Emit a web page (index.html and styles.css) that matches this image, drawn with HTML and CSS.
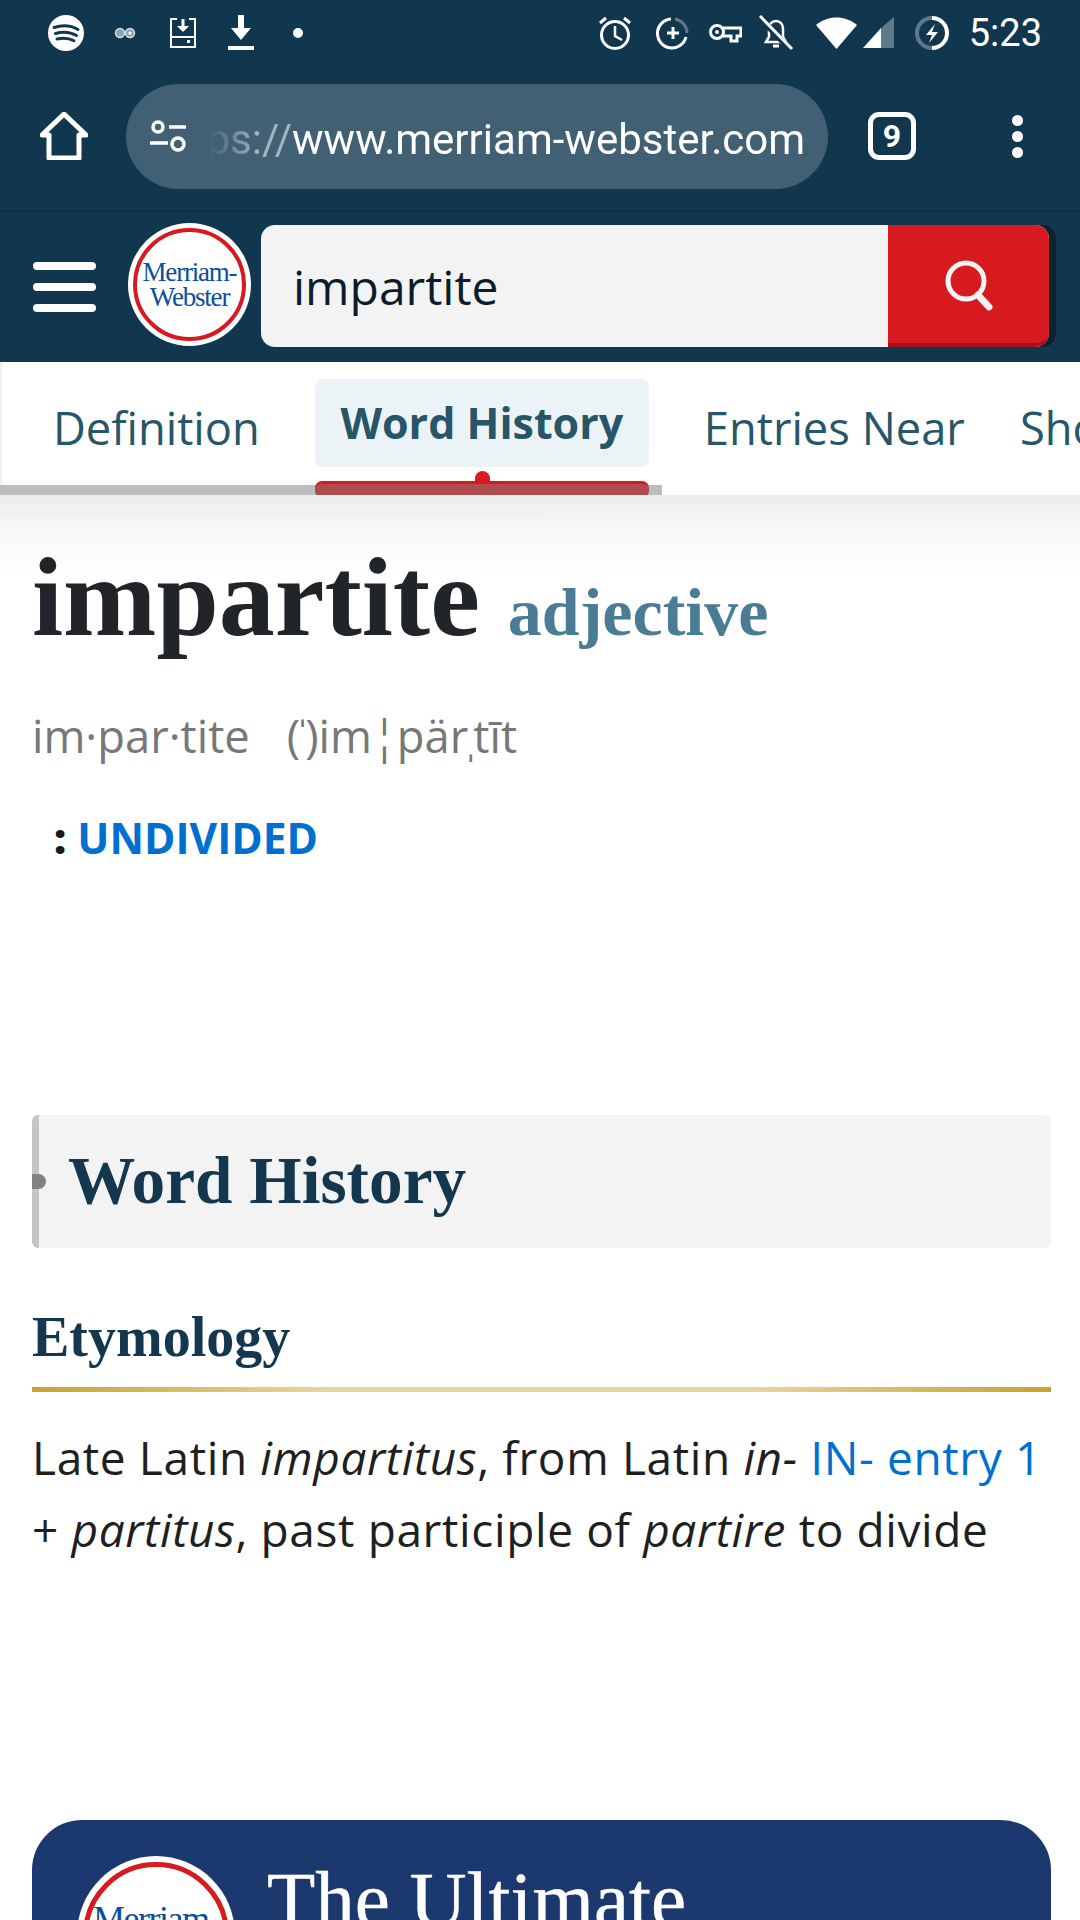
FILE: index.html
```html
<!DOCTYPE html>
<html lang="en">
<head>
<meta charset="utf-8">
<title>impartite</title>
<link rel="stylesheet" href="styles.css">
</head>
<body>
<div class="chrome">
  <div class="status">
    <div class="status-left">
      <svg class="i-spotify" width="38" height="38" viewBox="0 0 38 38"><circle cx="19" cy="19" r="18" fill="#fff"/><path d="M7 13.500c8-2.500 17-2 24 2M8.500 19.500c7-2 15-1.500 21 2M10 25c6-1.500 12-1 17 1.800" fill="none" stroke="#11374f" stroke-width="3" stroke-linecap="round"/></svg>
      <svg class="i-glasses" width="22" height="14" viewBox="0 0 22 14"><circle cx="6" cy="7" r="4.500" fill="#8fa3b0" stroke="#d5dce1" stroke-width="1.500"/><circle cx="16" cy="7" r="4.500" fill="#8fa3b0" stroke="#d5dce1" stroke-width="1.500"/><circle cx="16" cy="7" r="1.500" fill="#fff"/></svg>
      <svg class="i-save" width="28" height="32" viewBox="0 0 28 32"><path d="M8 2H2v28h24V2h-6M2 20h24" fill="none" stroke="#fff" stroke-width="2"/><path d="M14 2v9" stroke="#fff" stroke-width="3"/><path d="M8 9h12l-6 6z" fill="#fff"/><rect x="18" y="23" width="3" height="3" fill="#fff"/></svg>
      <svg class="i-download" width="26" height="35" viewBox="0 0 26 35"><path d="M10 0h6v13h7L13 25 3 13h7z" fill="#fff"/><rect y="31" width="26" height="4" fill="#fff"/></svg>
      <svg class="i-dot" width="10" height="10" viewBox="0 0 10 10"><circle cx="5" cy="5" r="5" fill="#fff"/></svg>
    </div>
    <div class="status-right">
      <svg width="34" height="36" viewBox="0 0 34 36"><circle cx="17" cy="20" r="13.500" fill="none" stroke="#fff" stroke-width="3"/><path d="M17 11v10l7 4" fill="none" stroke="#fff" stroke-width="2.500"/><path d="M2 8l6-5M32 8l-6-5" stroke="#fff" stroke-width="3"/></svg>
      <svg class="i-data" width="34" height="36" viewBox="0 0 34 36"><path d="M15 4A14.500 14.500 0 1 0 30 22" fill="none" stroke="#fff" stroke-width="3"/><path d="M19 4a14.500 14.500 0 0 1 12 14" fill="none" stroke="#60798a" stroke-width="3"/><path d="M17 12v12M11 18h12" stroke="#fff" stroke-width="3"/></svg>
      <svg class="i-key" width="34" height="20" viewBox="0 0 34 20"><circle cx="9" cy="9" r="6.500" fill="none" stroke="#fff" stroke-width="3"/><circle cx="9" cy="9" r="2" fill="#fff"/><path d="M15 5h18v8h-4v5h-6v-5h-8" fill="none" stroke="#fff" stroke-width="3"/></svg>
      <svg class="i-bell" width="36" height="36" viewBox="0 0 36 36"><path d="M8 27h20l-3-5v-8c0-5-3-8-7-8s-7 3-7 8v8z" fill="none" stroke="#fff" stroke-width="2.500"/><path d="M15 31h6" stroke="#fff" stroke-width="3"/><path d="M2 3l31 32" stroke="#11374f" stroke-width="6"/><path d="M2 1l32 33" stroke="#fff" stroke-width="3"/></svg>
      <svg class="i-wifi" width="41" height="32" viewBox="0 0 41 32"><path d="M0 8C12-2 29-2 41 8L20.500 32z" fill="#fff"/></svg>
      <svg class="i-signal" width="31" height="31" viewBox="0 0 31 31"><path d="M31 0v31H18V11z" fill="#5f7a8b"/><path d="M0 31L18 11v20z" fill="#fff"/></svg>
      <svg class="i-batt" width="34" height="36" viewBox="0 0 34 36"><path d="M17 3a15 15 0 0 1 0 30" fill="none" stroke="#fff" stroke-width="4"/><path d="M17 33a15 15 0 0 1 0-30" fill="none" stroke="#60798a" stroke-width="4"/><path d="M20 9l-9 11h6l-3 8 9-11h-6z" fill="#fff"/></svg>
      <span class="time">5:23</span>
    </div>
  </div>
  <div class="toolbar">
    <svg class="i-home" width="48" height="48" viewBox="0 0 48 48"><path d="M9 46h30V23h7L24 2 2 23h7z" fill="none" stroke="#fff" stroke-width="5" stroke-linejoin="round"/></svg>
    <div class="pill">
      <svg class="i-tune" width="38" height="34" viewBox="0 0 38 34"><circle cx="9" cy="8" r="5" fill="none" stroke="#fff" stroke-width="3.500"/><path d="M20 8h17M1 24h18" stroke="#fff" stroke-width="3.500"/><circle cx="29" cy="25" r="6" fill="none" stroke="#fff" stroke-width="3.500"/></svg>
      <div class="url"><span class="url-track"><span class="scheme">https://</span>www.merriam-webster.com</span></div>
    </div>
    <div class="tabcount">9</div>
    <div class="menu"><i></i><i></i><i></i></div>
  </div>
</div>

<header class="site">
  <div class="burger"><i></i><i></i><i></i></div>
  <div class="logo"><div class="logo-ring"><span>Merriam-</span><span>Webster</span></div></div>
  <div class="search">
    <div class="search-input">impartite</div>
    <div class="search-btn">
      <svg width="48" height="56" viewBox="0 0 48 56"><circle cx="21" cy="21" r="18" fill="none" stroke="#f3f3f3" stroke-width="5"/><path d="M33 35l11 12" stroke="#f3f3f3" stroke-width="7" stroke-linecap="round"/></svg>
    </div>
  </div>
</header>

<nav class="tabs">
  <a class="tab">Definition</a>
  <a class="tab tab-active">Word History</a>
  <a class="tab">Entries Near</a>
  <a class="tab">Show More</a>
</nav>

<div class="fade"></div>

<main class="content">
  <h1 class="headword">impartite <em class="pos">adjective</em></h1>
  <p class="pron"><span>im·par·tite</span><span>(<span class="mod">ˈ</span>)im¦pär<span class="mod">ˌ</span>tīt</span></p>
  <p class="def"><b>:</b> <a>UNDIVIDED</a></p>

  <h2 class="section">Word History</h2>
  <h3 class="sub">Etymology</h3>
  <p class="ety">Late Latin <i>impartitus</i>, from Latin <i>in-</i> <a>IN- entry 1</a> + <i>partitus</i>, past participle of <i>partire</i> to divide</p>

  <section class="promo">
    <div class="promo-logo"><div class="promo-ring"><span>Merriam-</span><span>Webster</span></div></div>
    <div class="promo-title">The Ultimate Dictionary Awaits</div>
  </section>
</main>
</body>
</html>
```
FILE: styles.css
```css
* { box-sizing: border-box; }
html, body { margin: 0; padding: 0; }
body {
  width: 1080px;
  height: 1920px;
  overflow: hidden;
  background: #fff;
  font-family: "Open Sans", sans-serif;
  color: #1a1a1a;
}
.chrome { background: #11374f; height: 212px; border-bottom: 2px solid #0f3145; }
.status { height: 62px; display: flex; justify-content: space-between; align-items: center; padding-top: 3px; }
.status-left { display: flex; align-items: center; padding-left: 47px; }
.i-glasses { margin-left: 29px; }
.i-save { margin-left: 33px; }
.i-download { margin-left: 31px; }
.i-dot { margin-left: 39px; }
.status-right { display: flex; align-items: center; padding-right: 38px; }
.i-data { margin-left: 24px; }
.i-key { margin-left: 18px; }
.i-bell { margin-left: 16px; }
.i-wifi { margin-left: 22px; }
.i-signal { margin-left: 6px; }
.i-batt { margin-left: 21px; }
.time { margin-left: 20px; font-family: Roboto, sans-serif; font-size: 38px; color: #fff; line-height: 1; }
.toolbar { height: 148px; display: flex; align-items: center; }
.i-home { margin-left: 40px; }
.pill {
  margin-left: 38px;
  width: 702px;
  height: 105px;
  border-radius: 53px;
  background: #426074;
  display: flex;
  align-items: center;
  padding-left: 23px;
}
.url {
  width: 596px;
  margin-left: 22px;
  padding-top: 7px;
  overflow: hidden;
  white-space: nowrap;
  font-family: Roboto, sans-serif;
  font-size: 42px;
  color: #fff;
  direction: rtl;
  line-height: 50px;
  mask-image: linear-gradient(90deg, transparent, #000 50px);
}
.url-track { direction: ltr; unicode-bidi: embed; display: inline-block; }
.scheme { color: #a5b4bf; }
.tabcount {
  margin-left: 40px;
  width: 48px;
  height: 48px;
  border: 5px solid #fff;
  border-radius: 11px;
  color: #fff;
  font-family: Roboto, sans-serif;
  font-weight: 700;
  font-size: 32px;
  display: flex;
  align-items: center;
  justify-content: center;
}
.menu { margin-left: 96px; display: flex; flex-direction: column; gap: 5px; }
.menu i { display: block; width: 11px; height: 11px; border-radius: 50%; background: #fff; }

.site { height: 150px; background: #11374f; display: flex; padding: 13px 0 0 33px; }
.burger { display: flex; flex-direction: column; gap: 13px; margin-top: 37px; width: 63px; }
.burger i { display: block; height: 8px; border-radius: 4px; background: #fff; }
.logo {
  margin-left: 32px;
  margin-top: -2px;
  width: 123px;
  height: 123px;
  border-radius: 50%;
  background: #fff;
  display: flex;
  align-items: center;
  justify-content: center;
  flex: none;
}
.logo-ring {
  width: 113px;
  height: 113px;
  border-radius: 50%;
  border: 4px solid #d71920;
  display: flex;
  flex-direction: column;
  align-items: center;
  justify-content: center;
  font-family: "Liberation Serif", serif;
  font-size: 27px;
  line-height: 25px;
  letter-spacing: -1.200px;
  color: #0a4f9e;
}
.search {
  margin-left: 10px;
  width: 788px;
  height: 122px;
  display: flex;
  border-radius: 14px;
  box-shadow: 7px 0 0 #0d2230;
  background: #f3f3f3;
}
.search-input { flex: 1; padding-left: 32px; font-size: 48px; line-height: 124px; color: #0d1c2a; }
.search-btn {
  width: 161px;
  background: #d71920;
  border-bottom: 4px solid #a80f1b;
  border-radius: 0 14px 14px 0;
  display: flex;
  align-items: center;
  justify-content: center;
  padding-top: 8px;
}
.tabs {
  height: 133px;
  position: relative;
  display: flex;
  gap: 55px;
  padding: 17px 0 0 53px;
  white-space: nowrap;
  overflow: hidden;
  background: #fff;
  box-shadow: inset 2px 0 0 #f0f0f0;
}
.tabs::after { content: ""; position: absolute; left: 0; bottom: 0; width: 662px; height: 10px; background: #bdbdbd; }
.tab { height: 88px; line-height: 88px; margin-top: 5px; font-size: 45.300px; color: #265668; position: relative; flex: none; }
.tab-active {
  margin-top: 0;
  width: 334px;
  text-align: center;
  background: #ecf3f7;
  border-radius: 8px;
  font-size: 43px;
  font-weight: 700;
}
.tab-active::before {
  content: "";
  position: absolute;
  left: 0;
  right: 0;
  top: 102px;
  height: 14px;
  background: #ad4d50;
  border-top: 3px solid #d71920;
  border-radius: 7px;
  z-index: 1;
}
.tab-active::after {
  content: "";
  position: absolute;
  left: 160px;
  top: 92px;
  width: 15px;
  height: 13px;
  background: #d71920;
  border-radius: 8px 8px 0 0;
}
.fade { height: 80px; background: linear-gradient(#ececec, #f7f7f7 40%, #fff); margin-bottom: -80px; position: relative; }
.fade::after { content: ""; position: absolute; left: 0; top: 18px; width: 540px; height: 1px; background: #ececec; }
.content { padding: 0 29px 0 32px; position: relative; }
.headword { margin: 0; padding-top: 37px; font-family: "Liberation Serif", serif; font-weight: 700; font-size: 112px; line-height: 130px; color: #212529; white-space: nowrap; }
.pos { font-style: normal; font-size: 68px; color: #4a7d95; }
.pron { margin: 31px 0 0; display: flex; gap: 37px; font-size: 45.300px; line-height: 56px; color: #777; }
.mod { margin: 0 -5px; }
.def { margin: 46px 0 0; padding-left: 22px; font-size: 42.500px; line-height: 56px; font-weight: 700; }
.def a { color: #0070d0; }
.section {
  margin: 249px 0 0;
  height: 133px;
  background: #f3f3f3;
  border-left: 7px solid #c4c5c7;
  border-radius: 6px;
  padding-left: 29px;
  font-family: "Liberation Serif", serif;
  font-size: 67.300px;
  line-height: 131px;
  color: #12374f;
  position: relative;
}
.section::before { content: ""; position: absolute; left: -7px; top: 59px; width: 14px; height: 15px; border-radius: 0 8px 8px 0; background: #808285; }
.sub {
  margin: 55px 0 0;
  height: 89px;
  font-family: "Liberation Serif", serif;
  font-size: 56px;
  line-height: 68px;
  color: #12374f;
  border-bottom: 5px solid transparent;
  border-image: linear-gradient(90deg, #c8a22e, #e8d6a0 30%, #e8d6a0 70%, #c8a22e) 1;
}
.ety { margin: 29px 0 0; font-size: 46px; line-height: 72px; letter-spacing: 0.620px; color: #1f1f1f; }
.ety a { color: #0070d0; }
.promo {
  margin-top: 255px;
  height: 400px;
  background: #1b396e;
  border-radius: 50px;
  display: flex;
  padding: 36px 0 0 45px;
}
.promo-logo { width: 158px; height: 158px; flex: none; border-radius: 50%; background: #fff; display: flex; align-items: center; justify-content: center; }
.promo-ring {
  width: 146px;
  height: 146px;
  border-radius: 50%;
  border: 5px solid #d71920;
  display: flex;
  flex-direction: column;
  align-items: center;
  justify-content: center;
  font-family: "Liberation Serif", serif;
  font-size: 36px;
  line-height: 32px;
  letter-spacing: -1.500px;
  color: #0a4f9e;
}
.promo-title { margin-left: 32px; margin-top: -6px; width: 560px; font-family: "Liberation Serif", serif; font-size: 79px; line-height: 100px; color: #fff; -webkit-text-stroke: 0.500px #fff; }
```
